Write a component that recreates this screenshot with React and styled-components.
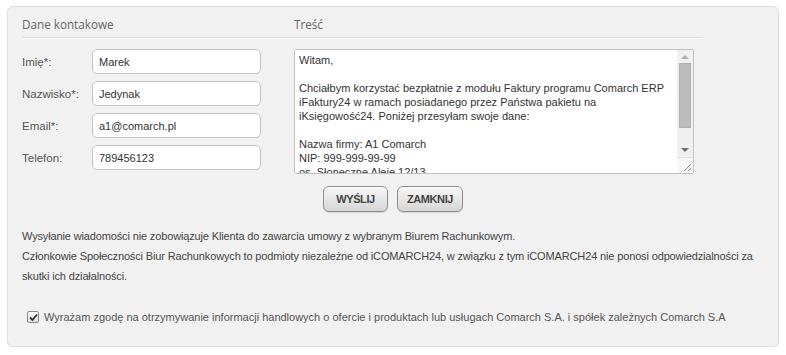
import React from 'react';
import styled, { createGlobalStyle } from 'styled-components';

const GlobalStyle = createGlobalStyle`
  body {
    margin: 0;
    background: #fff;
    font-family: "Liberation Sans", Arial, sans-serif;
  }
`;

const Panel = styled.div`
  margin: 6px 0 0 7px;
  padding: 0 14px 21px;
  box-sizing: border-box;
  width: 772px;
  background: #f1f1f1;
  border: 1px solid #dedede;
  border-radius: 6px;
  box-shadow: 0 1px 1px rgba(0, 0, 0, 0.06);
`;

const Top = styled.div`
  display: grid;
  grid-template-columns: 268px 413px;
`;

const Column = styled.div`
  display: flex;
  flex-direction: column;
`;

const Heading = styled.div`
  font-family: "Open Sans", "Liberation Sans", sans-serif;
  font-size: 11.7px;
  line-height: 16px;
  color: #666;
  padding: 9px 0 5px ${p => (p.$indent ? '4px' : '0')};
  border-bottom: 1px solid #dcdcdc;
  box-shadow: 0 1px 0 #fafafa;
`;

const Fields = styled.div`
  display: flex;
  flex-direction: column;
  gap: 7px;
  margin-top: 11px;
`;

const Row = styled.div`
  display: flex;
  align-items: center;
`;

const Label = styled.label`
  width: 70px;
  font-size: 11.5px;
  color: #555;
`;

const Input = styled.input`
  width: 169px;
  height: 25px;
  box-sizing: border-box;
  border: 1px solid #c4c4c4;
  border-radius: 5px;
  background: #fff;
  padding: 0 6px;
  font-family: "Liberation Sans", Arial, sans-serif;
  font-size: 11px;
  color: #333;
  outline: none;
`;

const MessageBox = styled.div`
  display: flex;
  margin: 11px 0 0 4px;
  width: 400px;
  height: 125px;
  box-sizing: border-box;
  border: 1px solid #c2c2c2;
  border-radius: 2px;
  background: #fff;
`;

const Message = styled.textarea`
  flex: 1;
  border: none;
  resize: none;
  overflow: hidden;
  padding: 3px 4px;
  margin: 0;
  font-family: "Liberation Sans", Arial, sans-serif;
  font-size: 11px;
  line-height: 14px;
  color: #333;
  outline: none;
  background: #fff;
`;

const Scroll = styled.div`
  width: 16px;
  display: flex;
  flex-direction: column;
  background: #f0f0f0;
`;

const Arrow = styled.div`
  height: ${p => p.$h}px;
  display: flex;
  align-items: center;
  justify-content: center;
  &::after {
    content: '';
    border-left: 4px solid transparent;
    border-right: 4px solid transparent;
    ${p => (p.$down ? 'border-top: 4px solid #6c6c6c;' : 'border-bottom: 4px solid #b0b0b0;')}
  }
`;

const Track = styled.div`
  height: 80px;
  padding: 0 2px;
`;

const Thumb = styled.div`
  height: 65px;
  background: #bcbcbc;
  border: 1px solid #b0b0b0;
  box-sizing: border-box;
`;

const Corner = styled.div`
  height: 16px;
  background: #f7f7f7;
  border-top: 1px solid #e2e2e2;
  box-sizing: border-box;
  display: flex;
  align-items: flex-end;
  justify-content: flex-end;
`;

const Buttons = styled.div`
  display: flex;
  justify-content: center;
  gap: 9px;
  margin-top: 12px;
`;

const Button = styled.button`
  width: ${p => p.$w}px;
  height: 26px;
  padding: 0;
  border: 1px solid #8e8e8e;
  border-radius: 6px;
  background: linear-gradient(#f7f7f7, #d5d5d5);
  box-shadow: inset 0 1px 0 #fff, 0 1px 1px rgba(0, 0, 0, 0.12);
  font-family: "Liberation Sans", sans-serif;
  font-weight: bold;
  font-size: 11px;
  letter-spacing: -0.4px;
  color: #444;
  cursor: pointer;
`;

const Notice = styled.p`
  margin: 14px 0 0;
  font-family: "Liberation Sans", sans-serif;
  font-size: 11px;
  letter-spacing: -0.14px;
  line-height: 20px;
  color: #444;
`;

const Consent = styled.label`
  display: flex;
  align-items: center;
  gap: 5px;
  margin: 23px 0 0 5px;
  height: 16px;
  font-size: 11px;
  white-space: nowrap;
  color: #555;
`;

const Box = styled.span`
  width: 12px;
  height: 12px;
  box-sizing: border-box;
  border: 1px solid #8a8a8a;
  border-radius: 2px;
  background: linear-gradient(#fdfdfd, #dcdcdc);
  display: flex;
  align-items: center;
  justify-content: center;
`;

const Hidden = styled.input`
  display: none;
`;

const fields = [
  ['Imię*:', 'Marek'],
  ['Nazwisko*:', 'Jedynak'],
  ['Email*:', 'a1@comarch.pl'],
  ['Telefon:', '789456123'],
];

const messageText = `Witam,

Chciałbym korzystać bezpłatnie z modułu Faktury programu Comarch ERP
iFaktury24 w ramach posiadanego przez Państwa pakietu na
iKsięgowość24. Poniżej przesyłam swoje dane:

Nazwa firmy: A1 Comarch
NIP: 999-999-99-99
os. Słoneczne Aleje 12/13
31-000 Kraków`;

export default function App() {
  return (
    <>
      <GlobalStyle />
      <Panel>
        <Top>
          <Column>
            <Heading>Dane kontakowe</Heading>
            <Fields>
              {fields.map(([label, value]) => (
                <Row key={label}>
                  <Label>{label}</Label>
                  <Input defaultValue={value} />
                </Row>
              ))}
            </Fields>
          </Column>
          <Column>
            <Heading $indent>Treść</Heading>
            <MessageBox>
              <Message defaultValue={messageText} />
              <Scroll>
                <Arrow $h={13} />
                <Track>
                  <Thumb />
                </Track>
                <Arrow $h={14} $down />
                <Corner>
                  <svg width="12" height="12" viewBox="0 0 12 12">
                    <path d="M10 3 L3 10 M10 7 L7 10" stroke="#8a8a8a" strokeWidth="1" />
                  </svg>
                </Corner>
              </Scroll>
            </MessageBox>
          </Column>
        </Top>
        <Buttons>
          <Button $w={65}>WYŚLIJ</Button>
          <Button $w={66}>ZAMKNIJ</Button>
        </Buttons>
        <Notice>
          Wysyłanie wiadomości nie zobowiązuje Klienta do zawarcia umowy z wybranym Biurem Rachunkowym.
          <br />
          Członkowie Społeczności Biur Rachunkowych to podmioty niezależne od iCOMARCH24, w związku z tym iCOMARCH24 nie ponosi odpowiedzialności za skutki ich działalności.
        </Notice>
        <Consent>
          <Hidden type="checkbox" defaultChecked />
          <Box>
            <svg width="9" height="9" viewBox="0 0 9 9">
              <path d="M1 4.5 L3.5 7 L8 1.5" fill="none" stroke="#333" strokeWidth="1.8" />
            </svg>
          </Box>
          Wyrażam zgodę na otrzymywanie informacji handlowych o ofercie i produktach lub usługach Comarch S.A. i spółek zależnych Comarch S.A
        </Consent>
      </Panel>
    </>
  );
}
